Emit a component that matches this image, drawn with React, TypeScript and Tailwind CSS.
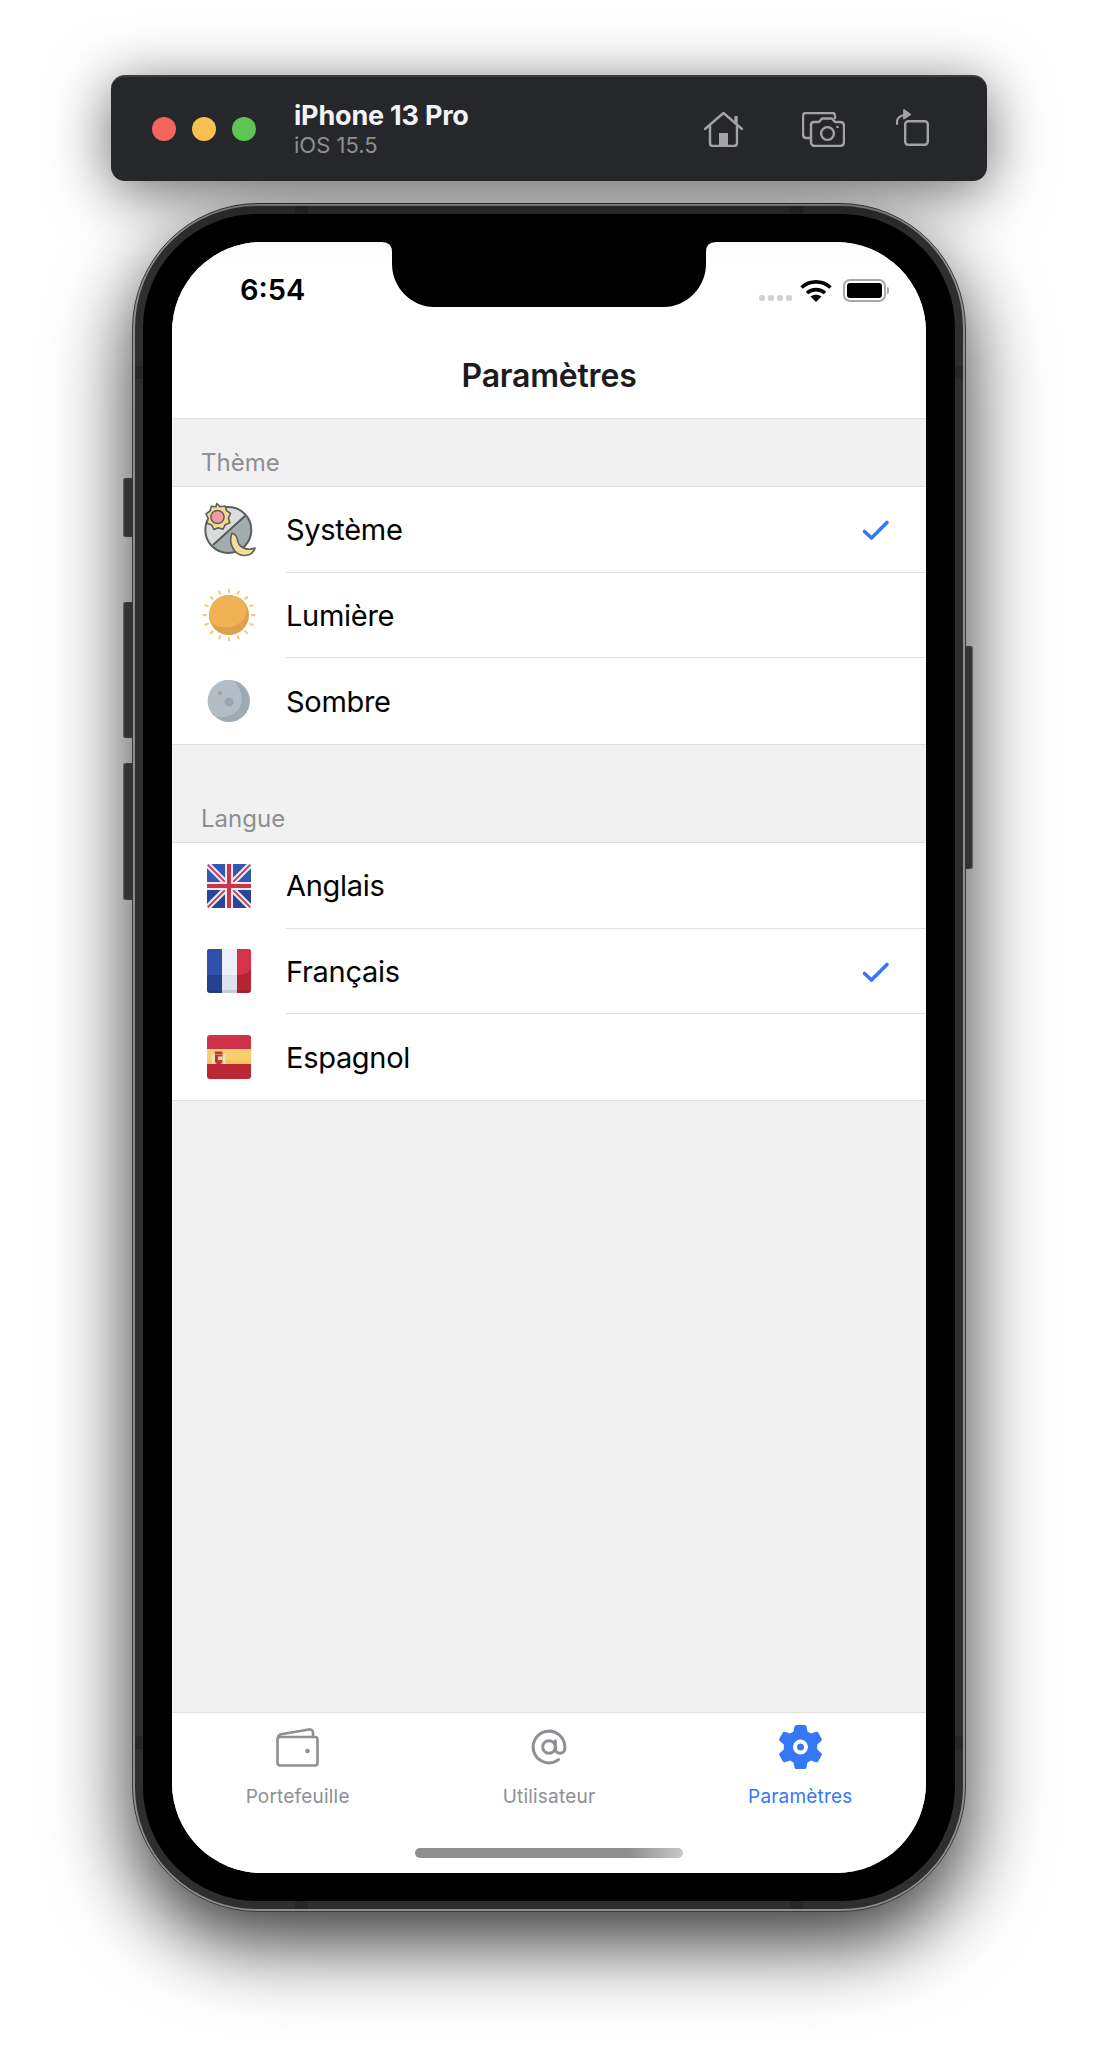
import React from "react";

const font = { fontFamily: "Inter, 'Liberation Sans', sans-serif" };

function HomeIcon() {
  return (
    <svg width="39" height="35" viewBox="0 0 39 35" fill="none" stroke="#a3a3a6" strokeWidth="2.4" strokeLinecap="round" strokeLinejoin="round">
      <path d="M1 17 L19.5 1 L38 17" />
      <path d="M32 11.5 V4" strokeWidth="3.4" strokeLinecap="butt" />
      <path d="M6 14 V31 Q6 34 9 34 H30 Q33 34 33 31 V14" />
      <rect x="15" y="21" width="9" height="13" fill="#a3a3a6" stroke="none" />
    </svg>
  );
}

function CameraIcon() {
  return (
    <svg width="43" height="35" viewBox="0 0 43 35" fill="none" stroke="#a3a3a6" strokeWidth="2.4" strokeLinecap="round" strokeLinejoin="round">
      <path d="M33 6 V4 Q33 1 30 1 H4 Q1 1 1 4 V22 Q1 26 4 26 H9" />
      <path d="M12 10 H17 L20 6.5 H30 L33 10 H38 Q42 10 42 14 V30 Q42 34 38 34 H13 Q9 34 9 30 V13 Q9 10 12 10 Z" />
      <circle cx="25.5" cy="21.5" r="6.4" />
      <circle cx="35.5" cy="15" r="1.3" fill="#a3a3a6" stroke="none" />
    </svg>
  );
}

function RotateIcon() {
  return (
    <svg width="33" height="37" viewBox="0 0 33 37" fill="none" stroke="#a3a3a6" strokeLinejoin="round" strokeLinecap="round">
      <rect x="9.2" y="12.2" width="22.6" height="23.6" rx="3" strokeWidth="2.4" />
      <path d="M1 15 V13 Q1 7 9 6" strokeWidth="2.2" />
      <path d="M8 0.5 L15 5.5 L8 10 Z" fill="#a3a3a6" strokeWidth="1" />
    </svg>
  );
}

function Wifi() {
  return (
    <svg width="32" height="23" viewBox="0 0 32 23" fill="none" stroke="#000" strokeWidth="3.6">
      <path d="M1.5 8.5 C9.5 1 22.5 1 30.5 8.5" />
      <path d="M7 14 C12 9.5 20 9.5 25 14" />
      <path d="M16 23 L10.6 17.6 C14 15 18 15 21.4 17.6 Z" fill="#000" stroke="none" />
    </svg>
  );
}

function Check() {
  return (
    <svg width="30" height="24" viewBox="0 0 30 24" fill="none" stroke="#3478f6" strokeWidth="3.6" strokeLinecap="round" strokeLinejoin="round" className="mt-[4px] shrink-0">
      <path d="M3.5 12.5 L10.5 19 L26 3.5" />
    </svg>
  );
}

function SystemIcon() {
  return (
    <svg width="54" height="56" viewBox="0 0 54 56">
      <defs>
        <clipPath id="sysclip"><circle cx="26.3" cy="28" r="23" /></clipPath>
      </defs>
      <g clipPath="url(#sysclip)">
        <rect x="0" y="0" width="54" height="56" fill="#a4adae" />
        <path d="M10 44 L44 13 L30 0 L0 0 L0 44 Z" fill="#dcdcdc" />
      </g>
      <path d="M11 43 L44 13" stroke="#555a5c" strokeWidth="2" />
      <circle cx="26.3" cy="28" r="23" fill="none" stroke="#5a5f60" strokeWidth="2" />
      <path
        d="M14.7 1.5 L18.3 4.8 L23.2 4 L24.6 8.7 L28.5 11.5 L26.4 16 L27.9 20.7 L23.2 22.8 L21 27.2 L16.3 25.8 L11.9 27.4 L9.6 23 L4.9 21.2 L6.2 16.4 L4 12 L8 9 L9.3 4.2 L14 4.8 Z"
        fill="#f4d98f"
        stroke="#5a5f60"
        strokeWidth="1.6"
        strokeLinejoin="round"
      />
      <circle cx="15.5" cy="15" r="6.6" fill="#ef9aa5" stroke="#5a5f60" strokeWidth="1.5" />
      <path d="M30 31 C26 41 32 54 43 53.5 C48 53 52 50 53 46 C46 49 38 46 36 40 C35 36 35 33 30 31 Z" fill="#f3de9c" stroke="#5a5f60" strokeWidth="1.6" strokeLinejoin="round" />
    </svg>
  );
}

function SunIcon() {
  const rays = Array.from({ length: 16 }, (_, i) => i * 22.5);
  return (
    <svg width="54" height="54" viewBox="0 0 54 54">
      {rays.map((a) => (
        <rect key={a} x="26" y="0.5" width="2" height="4.5" rx="1" fill="#f5c57a" transform={`rotate(${a} 27 27)`} />
      ))}
      <circle cx="27" cy="27" r="20" fill="#dea04b" />
      <path d="M27 7 A20 20 0 0 0 8.5 34.5 C14 39 24 41 32 38 C42 34 47 27 43 17 A20 20 0 0 0 27 7 Z" fill="#f0b254" />
    </svg>
  );
}

function MoonIcon() {
  return (
    <svg width="54" height="54" viewBox="0 0 54 54">
      <circle cx="27" cy="27" r="21" fill="#9eabb5" />
      <path d="M27 6 A21 21 0 0 0 12 42 C22 45 33 42 38 33 C42 25 39 14 32 7 A21 21 0 0 0 27 6 Z" fill="#b2bdc6" />
      <circle cx="27" cy="28" r="4.6" fill="#98a7b2" />
      <circle cx="18" cy="19" r="2.2" fill="#98a7b2" />
    </svg>
  );
}

function UkFlag() {
  return (
    <svg width="44" height="44" viewBox="0 0 44 44">
      <defs>
        <clipPath id="ukclip"><rect width="44" height="44" rx="3" /></clipPath>
      </defs>
      <g clipPath="url(#ukclip)">
        <rect width="44" height="44" fill="#2a4696" />
        <rect width="44" height="22" fill="#3558b8" />
        <path d="M0 0 L44 44 M44 0 L0 44" stroke="#e9ecf5" strokeWidth="6" />
        <path d="M0 0 L44 44 M44 0 L0 44" stroke="#cf3349" strokeWidth="1.8" />
        <path d="M22 0 V44 M0 22 H44" stroke="#e9ecf5" strokeWidth="8" />
        <path d="M22 0 V44 M0 22 H44" stroke="#cf3349" strokeWidth="4" />
      </g>
    </svg>
  );
}

function FrFlag() {
  return (
    <svg width="44" height="44" viewBox="0 0 44 44">
      <defs>
        <clipPath id="frclip"><rect width="44" height="44" rx="3" /></clipPath>
      </defs>
      <g clipPath="url(#frclip)">
        <rect width="15" height="44" fill="#25418f" />
        <path d="M0 0 H15 V26 H0 Z" fill="#2f50ab" />
        <rect x="15" width="15" height="44" fill="#dde2ec" />
        <path d="M15 0 H30 V26 H15 Z" fill="#edf0f9" />
        <rect x="30" width="14" height="44" fill="#b92434" />
        <path d="M30 0 H44 V17 C44 23 38 26 30 26 Z" fill="#d4334a" />
        <rect y="41" width="44" height="3" fill="#000" opacity="0.1" />
      </g>
    </svg>
  );
}

function EsFlag() {
  return (
    <svg width="44" height="44" viewBox="0 0 44 44">
      <defs>
        <clipPath id="esclip"><rect width="44" height="44" rx="3" /></clipPath>
      </defs>
      <g clipPath="url(#esclip)">
        <rect width="44" height="14" fill="#d0324a" />
        <rect y="14" width="44" height="16" fill="#f7c45f" />
        <rect y="14" width="44" height="11" fill="#f9ce6f" />
        <rect y="29" width="44" height="15" fill="#bc2735" />
        <rect x="5" y="19" width="2.4" height="10" fill="#f3e3c0" />
        <rect x="16" y="19" width="2.4" height="10" fill="#f3e3c0" />
        <rect x="8" y="16.5" width="7.5" height="3" fill="#c0323f" />
        <path d="M8 20 H15.5 V26 Q15.5 28.5 11.7 29.5 Q8 28.5 8 26 Z" fill="#c0323f" />
        <rect x="11" y="21.5" width="4.5" height="3.6" fill="#f3e3c0" />
      </g>
    </svg>
  );
}

function Wallet() {
  return (
    <svg width="43" height="39" viewBox="0 0 43 39" fill="none" stroke="#8e8e93" strokeWidth="2.6" strokeLinejoin="round" strokeLinecap="round">
      <path d="M2 10 Q2 7 5 6.2 L33 1.5 Q37 1 37 5 V9" />
      <rect x="1.5" y="9" width="40" height="28.5" rx="2.5" />
      <circle cx="31.5" cy="23" r="2.3" fill="#8e8e93" stroke="none" />
    </svg>
  );
}

function AtIcon() {
  return (
    <svg width="38" height="38" viewBox="0 0 24 24" fill="none" stroke="#8e8e93" strokeWidth="1.9" strokeLinecap="round" strokeLinejoin="round">
      <circle cx="12" cy="12" r="4" />
      <path d="M16 8v5a3 3 0 0 0 6 0v-1a10 10 0 1 0-4 8" />
    </svg>
  );
}

function Gear() {
  return (
    <svg width="43" height="44" viewBox="0 0 43 44">
      <path
        fillRule="evenodd"
        fill="#3478f6"
        d="M15.5 1.5 Q15.8 0 17.5 0 H25.5 Q27.2 0 27.5 1.5 L28.5 6.5 L32 8.5 L37 6.8 Q38.5 6.4 39.3 7.8 L42.6 13.8 Q43.3 15 42 16.2 L38.2 19.4 V24.6 L42 27.8 Q43.3 29 42.6 30.2 L39.3 36.2 Q38.5 37.6 37 37.2 L32 35.5 L28.5 37.5 L27.5 42.5 Q27.2 44 25.5 44 H17.5 Q15.8 44 15.5 42.5 L14.5 37.5 L11 35.5 L6 37.2 Q4.5 37.6 3.7 36.2 L0.4 30.2 Q-0.3 29 1 27.8 L4.8 24.6 V19.4 L1 16.2 Q-0.3 15 0.4 13.8 L3.7 7.8 Q4.5 6.4 6 6.8 L11 8.5 L14.5 6.5 Z M21.5 14.5 A7.5 7.5 0 1 0 21.5 29.5 A7.5 7.5 0 1 0 21.5 14.5 Z M21.5 18.5 A3.5 3.5 0 1 1 21.5 25.5 A3.5 3.5 0 1 1 21.5 18.5 Z"
      />
    </svg>
  );
}

function Notch() {
  return (
    <svg width="334" height="65" viewBox="0 0 334 65" className="absolute top-0 left-[210px]">
      <path d="M0 0 Q10 0 10 10 V22 C10 46 30 65 52 65 H282 C304 65 324 46 324 22 V10 Q324 0 334 0 Z" fill="#000" />
    </svg>
  );
}

function Row({ icon, label, checked, last }: { icon: React.ReactNode; label: string; checked?: boolean; last?: boolean }) {
  return (
    <div className="flex h-[85.67px] items-stretch bg-white">
      <div className="ml-[30px] mr-[30px] flex w-[54px] items-center justify-center">{icon}</div>
      <div className={`flex flex-1 items-center pr-[35px] ${last ? "" : "border-b border-[#e0e0e2]"}`}>
        <span className="mt-[1px] flex-1 text-[29px] leading-none tracking-[-0.3px] text-black">{label}</span>
        {checked && <Check />}
      </div>
    </div>
  );
}

function Section({ title, headH, children }: { title: string; headH: string; children: React.ReactNode }) {
  return (
    <section>
      <div className={`flex items-end pb-[11px] pl-[29px] ${headH}`}>
        <span className="text-[24px] leading-[24px] text-[#8e8e93]">{title}</span>
      </div>
      <div className="border-y border-[#dfdfe1]">{children}</div>
    </section>
  );
}

function Tab({ icon, label, active }: { icon: React.ReactNode; label: string; active?: boolean }) {
  return (
    <div className="flex flex-1 flex-col items-center">
      <div className="flex h-[46px] items-center justify-center">{icon}</div>
      <span className={`mt-[15px] text-[19px] leading-[24px] tracking-[0.2px] ${active ? "text-[#3478f6]" : "text-[#8e8e93]"}`}>{label}</span>
    </div>
  );
}

export default function App() {
  return (
    <div style={font} className="flex h-[2064px] w-[1098px] flex-col items-center overflow-hidden bg-white pt-[75px]">
      <header className="z-10 flex h-[106px] w-[876px] shrink-0 items-center rounded-[14px] border-t-2 border-[#3d3e42] bg-[#26272b] pl-[41px] shadow-[0_10px_60px_rgba(0,0,0,0.6)]">
        <div className="flex gap-[16px]">
          <span className="h-[24px] w-[24px] rounded-full bg-[#f2665c]" />
          <span className="h-[24px] w-[24px] rounded-full bg-[#f6bf4f]" />
          <span className="h-[24px] w-[24px] rounded-full bg-[#5ec454]" />
        </div>
        <div className="ml-[38px] flex flex-col">
          <span className="text-[27px] leading-[32px] font-bold tracking-[-0.2px] text-[#f3f3f4]">iPhone 13 Pro</span>
          <span className="text-[22px] leading-[26px] text-[#8f8f93]">iOS 15.5</span>
        </div>
        <div className="mr-[58px] ml-auto flex items-center">
          <HomeIcon />
          <div className="ml-[59px]"><CameraIcon /></div>
          <div className="mb-[3px] ml-[51px]"><RotateIcon /></div>
        </div>
      </header>

      <div className="relative mt-[22px] h-[1709px] w-[834px] shrink-0 rounded-[126px] border border-[#3a3a3c] bg-[#8e8e8e] p-[2px] shadow-[0_30px_80px_rgba(0,0,0,0.8)]">
        <span className="absolute top-[274px] left-[-10px] h-[59px] w-[10px] rounded-l-[3px] bg-[#333] shadow-[inset_1px_0_1px_#666]" />
        <span className="absolute top-[398px] left-[-10px] h-[136px] w-[10px] rounded-l-[3px] bg-[#333] shadow-[inset_1px_0_1px_#666]" />
        <span className="absolute top-[559px] left-[-10px] h-[137px] w-[10px] rounded-l-[3px] bg-[#333] shadow-[inset_1px_0_1px_#666]" />
        <span className="absolute top-[442px] right-[-8px] h-[223px] w-[8px] rounded-r-[3px] bg-[#333] shadow-[inset_-1px_0_1px_#666]" />

        <div className="h-full w-full rounded-[122px] border-[8px] border-[#2e2e2e] bg-black px-[29px] py-[28px]">
          <div className="relative flex h-full w-full flex-col overflow-hidden rounded-[90px] bg-[#f1f1f2]">
            <Notch />
            <div className="flex h-[177px] shrink-0 flex-col border-b border-[#e0e0e2] bg-white">
              <div className="flex h-[90px] shrink-0 items-start pt-[33px] pl-[68px]">
                <span className="text-[29px] leading-[30px] font-semibold text-black">6:54</span>
                <div className="mt-[4px] ml-auto flex items-center pr-[37px]">
                  <div className="mt-[14px] flex gap-[3px]">
                    <span className="h-[6px] w-[6px] rounded-[2px] bg-[#d2d2d2]" />
                    <span className="h-[6px] w-[6px] rounded-[2px] bg-[#d2d2d2]" />
                    <span className="h-[6px] w-[6px] rounded-[2px] bg-[#d2d2d2]" />
                    <span className="h-[6px] w-[6px] rounded-[2px] bg-[#d2d2d2]" />
                  </div>
                  <div className="ml-[8px] flex h-[23px]"><Wifi /></div>
                  <div className="ml-[11px] flex items-center">
                    <div className="h-[23px] w-[43px] rounded-[7px] border-2 border-[#a8a8a8] p-[2px]">
                      <div className="h-full w-full rounded-[3px] bg-black" />
                    </div>
                    <span className="ml-[1px] h-[7px] w-[2px] rounded-r-[2px] bg-[#a8a8a8]" />
                  </div>
                </div>
              </div>
              <div className="flex flex-1 items-start justify-center pt-[25px]">
                <span className="text-[32px] leading-[38px] font-semibold tracking-[-0.2px] text-[#1c1c1e]">Paramètres</span>
              </div>
            </div>

            <main className="flex-1">
              <Section title="Thème" headH="h-[67px]">
                <Row icon={<SystemIcon />} label="Système" checked />
                <Row icon={<SunIcon />} label="Lumière" />
                <Row icon={<MoonIcon />} label="Sombre" last />
              </Section>
              <Section title="Langue" headH="h-[97px]">
                <Row icon={<UkFlag />} label="Anglais" />
                <Row icon={<FrFlag />} label="Français" checked />
                <Row icon={<EsFlag />} label="Espagnol" last />
              </Section>
            </main>

            <nav className="relative flex h-[161px] shrink-0 border-t border-[#e0e0e2] bg-white pt-[11px]">
              <Tab icon={<Wallet />} label="Portefeuille" />
              <Tab icon={<AtIcon />} label="Utilisateur" />
              <Tab icon={<Gear />} label="Paramètres" active />
              <span className="absolute bottom-[15px] left-[243px] h-[10px] w-[268px] rounded-full bg-gradient-to-r from-[#8f8f8f] via-[#8f8f8f] via-80% to-[#c8c8c8]" />
            </nav>
          </div>
        </div>

        <span className="absolute top-[2px] left-[162px] h-[8px] w-[13px] bg-[#262626]" />
        <span className="absolute top-[2px] right-[162px] h-[8px] w-[13px] bg-[#262626]" />
        <span className="absolute bottom-[2px] left-[162px] h-[8px] w-[13px] bg-[#262626]" />
        <span className="absolute right-[162px] bottom-[2px] h-[8px] w-[13px] bg-[#262626]" />
        <span className="absolute top-[162px] left-[2px] h-[13px] w-[8px] bg-[#262626]" />
        <span className="absolute top-[162px] right-[2px] h-[13px] w-[8px] bg-[#262626]" />
        <span className="absolute bottom-[162px] left-[2px] h-[13px] w-[8px] bg-[#262626]" />
        <span className="absolute right-[2px] bottom-[162px] h-[13px] w-[8px] bg-[#262626]" />
      </div>
    </div>
  );
}
